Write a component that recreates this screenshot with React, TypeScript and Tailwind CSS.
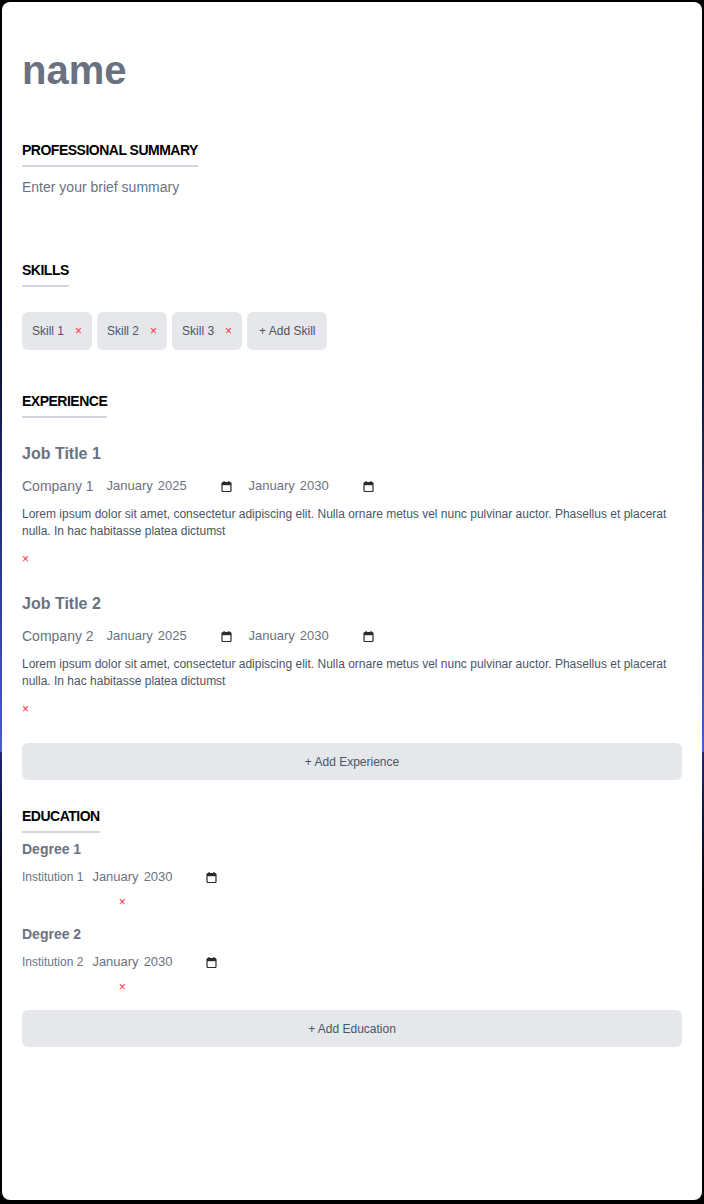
import React from "react";

const skills = ["Skill 1", "Skill 2", "Skill 3"];

const lorem =
  "Lorem ipsum dolor sit amet, consectetur adipiscing elit. Nulla ornare metus vel nunc pulvinar auctor. Phasellus et placerat nulla. In hac habitasse platea dictumst";

const jobs = [
  { title: "Job Title 1", company: "Company 1", start: "2025", end: "2030" },
  { title: "Job Title 2", company: "Company 2", start: "2025", end: "2030" },
];

const education = [
  { degree: "Degree 1", institution: "Institution 1", year: "2030" },
  { degree: "Degree 2", institution: "Institution 2", year: "2030" },
];

const CalendarIcon = () => (
  <svg width="11" height="11" viewBox="0 0 11 11" fill="none" className="text-[#2b2b2b]">
    <rect x="2.5" y="0" width="1.2" height="2.5" fill="currentColor" />
    <rect x="7.3" y="0" width="1.2" height="2.5" fill="currentColor" />
    <rect x="1" y="1.6" width="9" height="8.9" rx="1" stroke="currentColor" strokeWidth="1.2" />
    <rect x="1" y="1.6" width="9" height="2.6" fill="currentColor" />
  </svg>
);

const DateField = ({ year, className = "" }: { year: string; className?: string }) => (
  <div className={`inline-flex w-[130px] items-center justify-between pr-[5px] text-[13px] leading-5 text-gray-500 ${className}`}>
    <span className="flex gap-[5px]">
      <span>January</span>
      <span>{year}</span>
    </span>
    <CalendarIcon />
  </div>
);

const SectionTitle = ({ children, className = "" }: { children: React.ReactNode; className?: string }) => (
  <div className={`flex ${className}`}>
    <h2 className="border-b-2 border-gray-300 pb-[5px] text-sm leading-5 font-bold tracking-[-0.5px] text-black">
      {children}
    </h2>
  </div>
);

const Remove = ({ className = "" }: { className?: string }) => (
  <button className={`text-xs leading-4 text-red-500 ${className}`}>×</button>
);

export default function App() {
  return (
    <div className="min-h-screen bg-[linear-gradient(180deg,#000_0%,#05081a_25%,#4a5ad8_62.5%,#1f2672_62.5%,#000_75%,#000_100%)] p-[2px] font-['Liberation_Sans',Arial,sans-serif]">
      <div className="h-[1198px] rounded-[8px] bg-white px-5 pt-[44px]">
        <h1 className="text-[40px] leading-[48px] font-bold text-gray-500">name</h1>

        <SectionTitle className="mt-[46px]">PROFESSIONAL SUMMARY</SectionTitle>
        <p className="mt-[10px] text-sm leading-5 text-gray-500">Enter your brief summary</p>

        <SectionTitle className="mt-[63px]">SKILLS</SectionTitle>
        <div className="mt-[25px] flex gap-[5px]">
          {skills.map((s) => (
            <div key={s} className="flex h-[38px] items-center rounded-md bg-gray-200 px-[10px] text-xs text-gray-600">
              <span>{s}</span>
              <Remove className="ml-[11px]" />
            </div>
          ))}
          <button className="flex h-[38px] items-center rounded-md bg-gray-200 px-[12px] text-xs text-gray-600">
            + Add Skill
          </button>
        </div>

        <SectionTitle className="mt-[41px]">EXPERIENCE</SectionTitle>
        {jobs.map((j, i) => (
          <div key={j.title} className={i === 0 ? "mt-[24px]" : "mt-[25px]"}>
            <h3 className="text-base leading-6 font-bold text-gray-500">{j.title}</h3>
            <div className="mt-[10px] flex items-center">
              <span className="text-sm leading-5 text-gray-500">{j.company}</span>
              <DateField year={j.start} className="ml-[13px]" />
              <DateField year={j.end} className="ml-[12px]" />
            </div>
            <p className="mt-[10px] text-xs leading-[17px] text-gray-600">{lorem}</p>
            <div className="mt-[11px] flex">
              <Remove />
            </div>
          </div>
        ))}
        <button className="mt-[26px] h-[37px] w-full rounded-md bg-gray-200 text-xs text-gray-600">
          + Add Experience
        </button>

        <SectionTitle className="mt-[26px]">EDUCATION</SectionTitle>
        {education.map((e, i) => (
          <div key={e.degree} className={i === 0 ? "mt-[6px]" : "mt-[14px]"}>
            <h3 className="text-sm leading-5 font-bold text-gray-500">{e.degree}</h3>
            <div className="mt-2 flex">
              <div className="flex flex-col items-center">
                <div className="flex items-center">
                  <span className="text-xs leading-5 text-gray-500">{e.institution}</span>
                  <DateField year={e.year} className="ml-[9px]" />
                </div>
                <Remove className="mt-[7px]" />
              </div>
            </div>
          </div>
        ))}
        <button className="mt-[15px] h-[37px] w-full rounded-md bg-gray-200 text-xs text-gray-600">
          + Add Education
        </button>
      </div>
    </div>
  );
}
